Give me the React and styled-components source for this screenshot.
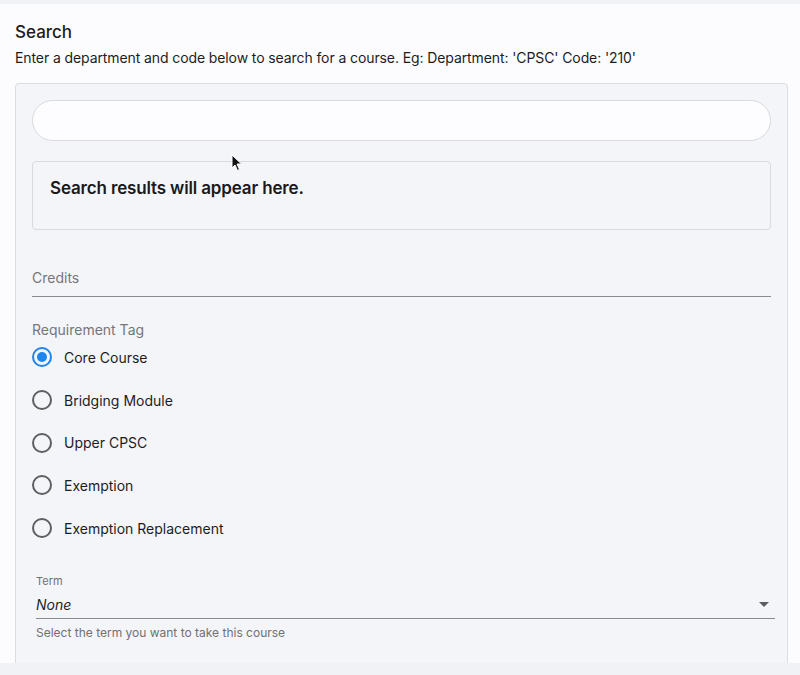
import React from 'react'
import styled, { createGlobalStyle } from 'styled-components'

const GlobalStyle = createGlobalStyle`
  html, body {
    margin: 0;
    padding: 0;
    background: #f1f2f6;
    font-family: Inter, "Noto Sans", "Liberation Sans", sans-serif;
    color: #1c1c1e;
  }
`

const Page = styled.div`
  position: relative;
  height: 675px;
  overflow: hidden;
  padding-top: 4px;
  box-sizing: border-box;
`

const Panel = styled.div`
  background: #fcfcfe;
  height: 659px;
  padding: 17px 12px 0 15px;
  box-sizing: border-box;
  overflow: hidden;
`

const Title = styled.h2`
  margin: 0;
  font-size: 17px;
  font-weight: 500;
  line-height: 22px;
  color: #1d1d1f;
`

const Subtitle = styled.p`
  margin: 6px 0 0;
  font-size: 14px;
  line-height: 18px;
  letter-spacing: -0.1px;
  color: #1d1d1f;
`

const Card = styled.div`
  margin-top: 16px;
  background: #f4f5f9;
  border: 1px solid #dcdde2;
  border-radius: 4px;
  padding: 16px 16px 40px 16px;
  height: 640px;
  box-sizing: border-box;
`

const SearchInput = styled.input`
  display: block;
  width: 100%;
  box-sizing: border-box;
  height: 41px;
  border-radius: 21px;
  border: 1px solid #d9d9de;
  background: #fdfcfe;
  outline: none;
  padding: 0 18px;
  font-family: inherit;
  font-size: 14px;
`

const Results = styled.div`
  margin-top: 20px;
  height: 69px;
  box-sizing: border-box;
  border: 1px solid #d9dae0;
  border-radius: 4px;
  padding: 16px 17px;
  font-size: 17px;
  font-weight: 600;
  letter-spacing: -0.15px;
  color: #1a1a1c;
`

const UnderlineField = styled.div`
  margin-top: 31px;
  border-bottom: 1px solid #8c8c90;
  height: 36px;
  padding-bottom: 2px;
  box-sizing: border-box;
  display: flex;
  align-items: center;
  font-size: 14px;
  color: #76767b;
`

const GroupLabel = styled.div`
  margin-top: 24px;
  font-size: 14px;
  color: #76767b;
  line-height: 18px;
`

const RadioList = styled.div`
  display: flex;
  flex-direction: column;
  margin-top: 1px;
`

const RadioRow = styled.label`
  display: flex;
  align-items: center;
  gap: 12px;
  height: 42.7px;
  font-size: 14px;
  color: #1d1d1f;
  margin-top: ${({ first }) => (first ? '-4px' : '0')};
`

const RadioCircle = styled.span`
  width: 16px;
  height: 16px;
  border-radius: 50%;
  border: 2px solid ${({ checked }) => (checked ? '#1f84ee' : '#5e5e63')};
  display: flex;
  align-items: center;
  justify-content: center;
  flex-shrink: 0;
  &::after {
    content: '';
    width: 10px;
    height: 10px;
    border-radius: 50%;
    background: ${({ checked }) => (checked ? '#1f84ee' : 'transparent')};
  }
`

const SelectField = styled.div`
  margin: 25px -4px 0 4px;
`

const SmallLabel = styled.div`
  font-size: 11px;
  color: #6e6e73;
  line-height: 14px;
`

const SelectRow = styled.div`
  display: flex;
  align-items: center;
  justify-content: space-between;
  height: 27px;
  border-bottom: 1px solid #8a8a8e;
  margin-top: 3px;
  padding-right: 6px;
`

const SelectValue = styled.span`
  font-size: 14px;
  font-style: italic;
  color: #1d1d1f;
`

const Caret = styled.span`
  width: 0;
  height: 0;
  border-left: 5px solid transparent;
  border-right: 5px solid transparent;
  border-top: 5px solid #5c5c60;
`

const Helper = styled.div`
  margin-top: 6px;
  font-size: 12px;
  color: #707075;
`

const Cursor = styled.svg`
  position: absolute;
  left: 231px;
  top: 154px;
`

const tags = ['Core Course', 'Bridging Module', 'Upper CPSC', 'Exemption', 'Exemption Replacement']

export default function App() {
  return (
    <Page>
      <GlobalStyle />
      <Panel>
        <Title>Search</Title>
        <Subtitle>
          Enter a department and code below to search for a course. Eg: Department: 'CPSC' Code: '210'
        </Subtitle>
        <Card>
          <SearchInput />
          <Results>Search results will appear here.</Results>
          <UnderlineField>Credits</UnderlineField>
          <GroupLabel>Requirement Tag</GroupLabel>
          <RadioList>
            {tags.map((t, i) => (
              <RadioRow key={t} first={i === 0}>
                <RadioCircle checked={i === 0} />
                {t}
              </RadioRow>
            ))}
          </RadioList>
          <SelectField>
            <SmallLabel>Term</SmallLabel>
            <SelectRow>
              <SelectValue>None</SelectValue>
              <Caret />
            </SelectRow>
            <Helper>Select the term you want to take this course</Helper>
          </SelectField>
        </Card>
      </Panel>
      <Cursor width="12" height="18" viewBox="0 0 12 18">
        <path d="M1 1 L1 14 L4 11 L6.5 16.5 L8.5 15.5 L6 10 L10.5 10 Z" fill="#111" stroke="#fff" strokeWidth="1" />
      </Cursor>
    </Page>
  )
}
